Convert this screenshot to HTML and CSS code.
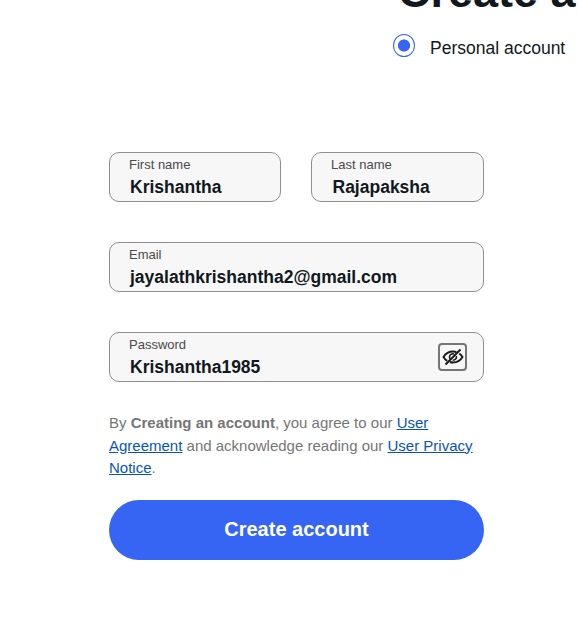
FILE: index.html
```html
<!DOCTYPE html>
<html lang="en">
<head>
<meta charset="utf-8">
<title>Create an account</title>
<link rel="stylesheet" href="styles.css">
</head>
<body>
<header class="top">
  <h1 class="title">Create an account</h1>
  <div class="account-type"><span class="radio"></span><span class="type-name">Personal account</span></div>
</header>
<main class="form">
  <div class="row">
    <div class="field first"><span class="label">First name</span><span class="value">Krishantha</span></div>
    <div class="field last"><span class="label">Last name</span><span class="value">Rajapaksha</span></div>
  </div>
  <div class="field email"><span class="label">Email</span><span class="value">jayalathkrishantha2@gmail.com</span></div>
  <div class="field password">
    <div class="texts"><span class="label">Password</span><span class="value">Krishantha1985</span></div>
    <button class="toggle" aria-label="Hide password">
      <svg width="22" height="20" viewBox="0 0 22 20" fill="none" stroke="#191919" stroke-width="1.900">
        <path d="M14.500 5.100C13.400 4.700 12.200 4.500 11 4.500C6.500 4.500 3.300 7 1.500 10C2.400 11.500 3.600 12.900 5.200 13.900"/>
        <path d="M17.300 6.500C18.600 7.400 19.700 8.600 20.500 10C18.700 13 15.500 15.500 11 15.500C9.900 15.500 8.800 15.300 7.900 15"/>
        <path stroke-width="1.600" d="M12 6.900C9.500 6.200 7.500 7.700 7.500 10C7.500 10.700 7.700 11.300 8 11.900M14.300 9C14.900 11.400 13.200 13.300 10.700 13.200"/>
        <path d="M18.500 2.500L3.500 17.500"/>
      </svg>
    </button>
  </div>
  <p class="legal">By <b>Creating an account</b>, you agree to our <a href="#">User Agreement</a> and acknowledge reading our <a href="#">User Privacy Notice</a>.</p>
  <button class="submit">Create account</button>
</main>
</body>
</html>
```
FILE: styles.css
```css
* { box-sizing: border-box; }
body {
  margin: 0;
  height: 632px;
  overflow: hidden;
  background: #fff;
  color: #111820;
  font-family: "Liberation Sans", Arial, sans-serif;
}
.top { height: 152px; padding-left: 393px; overflow: hidden; white-space: nowrap; }
.title { margin: -33px 0 0 5px; font-size: 45px; line-height: 50px; }
.account-type { display: flex; align-items: center; gap: 15px; margin-top: 16px; font-size: 17.5px; line-height: 24px; }
.type-name { padding-top: 3px; margin-bottom: -1px; }
.radio {
  width: 22px;
  height: 23px;
  margin-bottom: 2px;
  border: 1.5px solid #3665f3;
  border-radius: 50%;
  background: radial-gradient(circle, #3665f3 5.700px, transparent 6.400px);
}
.form { width: 375px; margin-left: 109px; }
.row { display: grid; grid-template-columns: 172px 173px; gap: 30px; }
.field {
  height: 50px;
  padding: 3px 16px 0 19px;
  border: 1px solid #8f8f8f;
  border-radius: 10px;
  background: #f7f7f7;
}
.label { display: block; color: #4a4a4a; font-size: 13px; line-height: 18px; }
.value { display: block; padding-left: 1px; font-size: 17.5px; font-weight: bold; line-height: 26px; }
.last .value { padding-left: 1.5px; }
.email, .password { margin-top: 40px; }
.password { display: flex; justify-content: space-between; }
.toggle {
  display: grid;
  place-items: center;
  width: 29px;
  height: 28px;
  margin-top: 7px;
  padding: 0;
  border: 2px solid #767676;
  border-radius: 4px;
  background: #f7f7f7;
}
.legal { margin: 30px 0 20px; color: #767676; font-size: 15px; line-height: 22.5px; }
.legal a { color: #0654ba; text-underline-offset: 1px; }
.submit {
  display: block;
  width: 375px;
  height: 60px;
  padding: 0;
  border: 0;
  border-radius: 30px;
  background: #3665f3;
  color: #fff;
  font: bold 20px "Liberation Sans", Arial, sans-serif;
}
```
